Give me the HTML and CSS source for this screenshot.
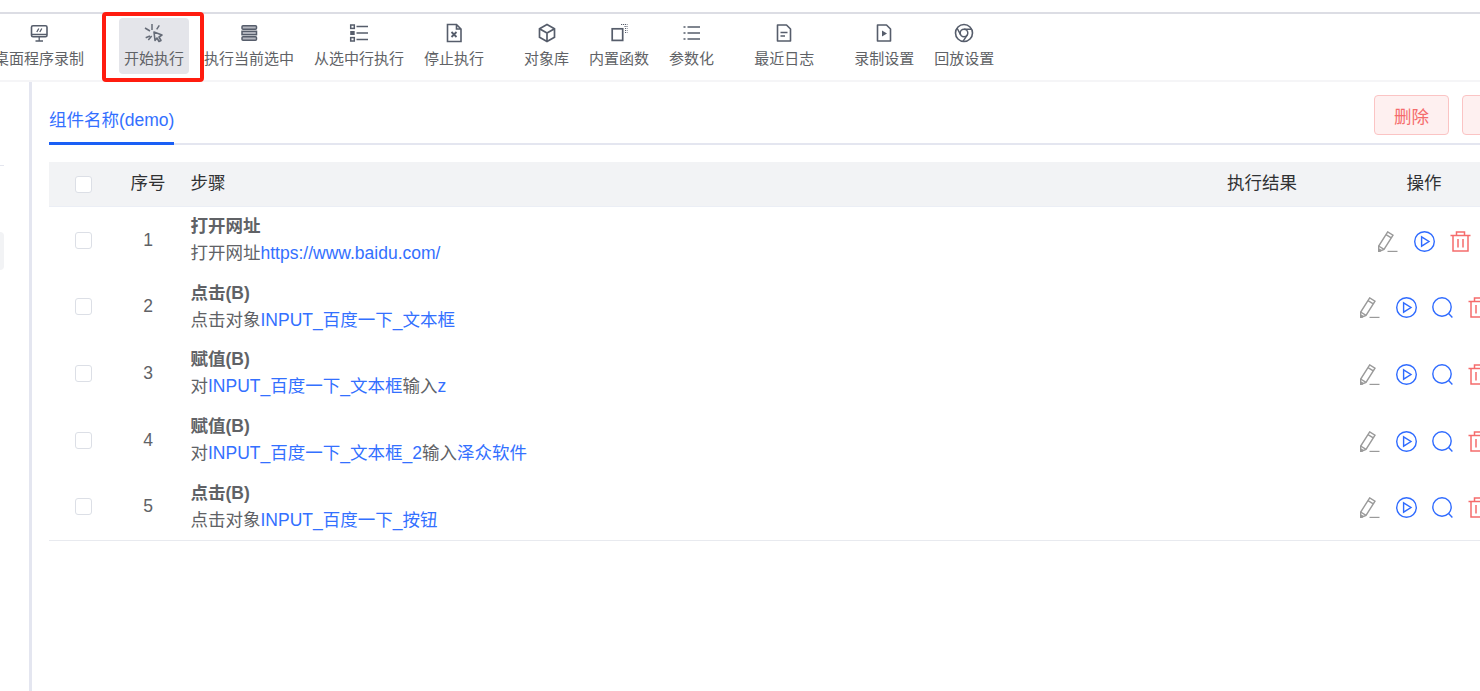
FILE: index.html
```html
<!DOCTYPE html>
<html lang="zh-CN">
<head>
<meta charset="utf-8">
<title>组件名称(demo)</title>
<link rel="stylesheet" href="styles.css">
</head>
<body>
<svg class="defs" width="0" height="0" aria-hidden="true">
  <defs>
    <g id="i-edit" fill="none" stroke="#9a9a9a" stroke-width="1.4">
      <path d="M0.7 20.6 V15 L9.700 0.900 L15 4.200 L6 18.400 Z"/>
      <path d="M0.700 15 L6 18.400 M8 3.600 L13.300 6.900"/>
      <path d="M0.900 18.500 L3 20" stroke-width="2.200"/>
      <path d="M9.500 20.500 H19.500"/>
    </g>
    <g id="i-play" fill="none" stroke="#2f6bff" stroke-width="1.4">
      <circle cx="10.500" cy="10.500" r="9.800"/>
      <path d="M7.600 5.800 L15 10.500 L7.600 15.200 Z"/>
    </g>
    <g id="i-search" fill="none" stroke="#2f6bff" stroke-width="1.4">
      <circle cx="10" cy="10" r="9.200"/>
      <path d="M16.600 16.600 L20.400 20.400"/>
    </g>
    <g id="i-trash" fill="none" stroke="#f56c6c" stroke-width="1.500">
      <path d="M0.500 4.500 H20.500 M6.500 4.500 V1 H14.500 V4.500"/>
      <path d="M3 4.500 V20 H18 V4.500"/>
      <path d="M8 8 V16.500 M13 8 V16.500"/>
    </g>
  </defs>
</svg>
<div class="topgap"></div>
<nav class="toolbar">
  <div class="tool first"><svg class="ticon" viewBox="0 0 20 20"><rect x="2.500" y="2.800" width="15.500" height="11" rx="1.500" fill="none" stroke="#565d6b" stroke-width="1.600"/><path d="M2.500 11.500H18" stroke="#565d6b" stroke-width="1.500"/><path d="M6.500 18H14M10.200 14V18M7.800 9L9.800 5.500M10.800 9L12.800 5.500" fill="none" stroke="#565d6b" stroke-width="1.300"/></svg><span>桌面程序录制</span></div>
  <div class="tool active"><svg class="ticon" viewBox="0 0 20 20"><path d="M8 1V7M15.300 2.300L12.700 6.300M1 5L6 8M1.700 14.700L6 13M4.300 17L7.700 13" fill="none" stroke="#666c78" stroke-width="1.500"/><path d="M10 9L18 12L15 14L17 17.500L15 18.500L13 15L11 17.500Z" fill="none" stroke="#666c78" stroke-width="1.600" stroke-linejoin="round"/></svg><span>开始执行</span></div>
  <div class="tool"><svg class="ticon" viewBox="0 0 20 20"><rect x="3" y="2.800" width="14.500" height="3.400" rx="1" fill="#b4b7bf" stroke="#565d6b" stroke-width="1.500"/><rect x="3" y="8.300" width="14.500" height="3.400" fill="#b4b7bf" stroke="#565d6b" stroke-width="1.500"/><rect x="3" y="13.800" width="14.500" height="3.400" rx="1" fill="#b4b7bf" stroke="#565d6b" stroke-width="1.500"/></svg><span>执行当前选中</span></div>
  <div class="tool"><svg class="ticon" viewBox="0 0 20 20"><path d="M7.500 3.500H19M7.500 10H19M7.500 16.500H19" stroke="#565d6b" stroke-width="1.600"/><rect x="1.700" y="2" width="3.600" height="3.400" fill="none" stroke="#565d6b" stroke-width="1.500"/><rect x="1.200" y="8" width="4.500" height="4" fill="#565d6b"/><rect x="1.700" y="14.600" width="3.600" height="3.400" fill="none" stroke="#565d6b" stroke-width="1.500"/></svg><span>从选中行执行</span></div>
  <div class="tool"><svg class="ticon" viewBox="0 0 20 20"><path d="M3.500 1.500H12.500L17 6V18.500H3.500Z M12.500 1.500V6H17" fill="none" stroke="#565d6b" stroke-width="1.600"/><path d="M7.500 9L12.500 14M12.500 9L7.500 14" stroke="#565d6b" stroke-width="1.800"/></svg><span>停止执行</span></div>
  <div class="tool gap"><svg class="ticon" viewBox="0 0 20 20"><path d="M10 1.500L17.500 5.700V14.300L10 18.500L2.500 14.300V5.700Z M2.500 5.700L10 10L17.500 5.700M10 10V18.500" fill="none" stroke="#565d6b" stroke-width="1.700"/></svg><span>对象库</span></div>
  <div class="tool"><svg class="ticon" viewBox="0 0 20 20"><rect x="3.200" y="5.800" width="10.500" height="11.600" fill="none" stroke="#565d6b" stroke-width="1.700"/><path d="M12 1.500H18.500M15.500 3.500H18.500M16 5.500H18.500M16 7.500H18.500M16 9.500H18.500" stroke="#565d6b" stroke-width="1.200" stroke-dasharray="1.200 0.800"/></svg><span>内置函数</span></div>
  <div class="tool"><svg class="ticon" viewBox="0 0 20 20"><path d="M5.500 4H18M5.500 10H18M5.500 16H18" stroke="#565d6b" stroke-width="1.600"/><path d="M1.500 4H3.500M1.500 10H3.500M1.500 16H3.500" stroke="#565d6b" stroke-width="1.600"/></svg><span>参数化</span></div>
  <div class="tool gap"><svg class="ticon" viewBox="0 0 20 20"><path d="M3.500 2H12.500L16.500 6V18H3.500Z" fill="none" stroke="#565d6b" stroke-width="1.600" stroke-linejoin="round"/><path d="M6.500 9.500H13.500M6.500 13H11" stroke="#565d6b" stroke-width="1.500"/></svg><span>最近日志</span></div>
  <div class="tool gap"><svg class="ticon" viewBox="0 0 20 20"><path d="M3.500 2H12.500L16.500 6V18H3.500Z" fill="none" stroke="#565d6b" stroke-width="1.600" stroke-linejoin="round"/><path d="M8 7.500L13 10.500L8 13.500Z" fill="#565d6b"/></svg><span>录制设置</span></div>
  <div class="tool"><svg class="ticon" viewBox="0 0 20 20"><circle cx="10" cy="10" r="8.500" fill="none" stroke="#565d6b" stroke-width="1.600"/><circle cx="10" cy="10" r="3.800" fill="none" stroke="#565d6b" stroke-width="1.500"/><path d="M10 6.200H18M6.700 11.900L3 5M13.300 11.900L9 18.400" fill="none" stroke="#565d6b" stroke-width="1.500"/></svg><span>回放设置</span></div>
</nav>
<div class="highlight"></div>
<div class="layout">
  <aside class="side">
    <div class="side-line"></div>
    <div class="side-item"></div>
  </aside>
  <main class="content">
    <div class="tabbar">
      <div class="tab">组件名称(demo)</div>
      <div class="actions">
        <button class="danger">删除</button>
        <button class="danger"></button>
      </div>
    </div>
    <div class="row head">
      <div class="c-check"><span class="box"></span></div>
      <div class="c-seq">序号</div>
      <div class="c-step">步骤</div>
      <div class="c-res">执行结果</div>
      <div class="c-act">操作</div>
    </div>
    <div class="row body">
      <div class="c-check"><span class="box"></span></div>
      <div class="c-seq num">1</div>
      <div class="c-step"><b>打开网址</b><p>打开网址<a>https://www.baidu.com/</a></p></div>
      <div class="c-res"></div>
      <div class="c-act">
        <svg class="a" viewBox="0 0 21 21"><use href="#i-edit"/></svg>
        <svg class="a" viewBox="0 0 21 21"><use href="#i-play"/></svg>
        <svg class="a" viewBox="0 0 21 21"><use href="#i-trash"/></svg>
      </div>
    </div>
    <div class="row body">
      <div class="c-check"><span class="box"></span></div>
      <div class="c-seq num">2</div>
      <div class="c-step"><b>点击(B)</b><p>点击对象<a>INPUT_百度一下_文本框</a></p></div>
      <div class="c-res"></div>
      <div class="c-act">
        <svg class="a" viewBox="0 0 21 21"><use href="#i-edit"/></svg>
        <svg class="a" viewBox="0 0 21 21"><use href="#i-play"/></svg>
        <svg class="a" viewBox="0 0 21 21"><use href="#i-search"/></svg>
        <svg class="a" viewBox="0 0 21 21"><use href="#i-trash"/></svg>
      </div>
    </div>
    <div class="row body">
      <div class="c-check"><span class="box"></span></div>
      <div class="c-seq num">3</div>
      <div class="c-step"><b>赋值(B)</b><p>对<a>INPUT_百度一下_文本框</a>输入<a>z</a></p></div>
      <div class="c-res"></div>
      <div class="c-act">
        <svg class="a" viewBox="0 0 21 21"><use href="#i-edit"/></svg>
        <svg class="a" viewBox="0 0 21 21"><use href="#i-play"/></svg>
        <svg class="a" viewBox="0 0 21 21"><use href="#i-search"/></svg>
        <svg class="a" viewBox="0 0 21 21"><use href="#i-trash"/></svg>
      </div>
    </div>
    <div class="row body">
      <div class="c-check"><span class="box"></span></div>
      <div class="c-seq num">4</div>
      <div class="c-step"><b>赋值(B)</b><p>对<a>INPUT_百度一下_文本框_2</a>输入<a>泽众软件</a></p></div>
      <div class="c-res"></div>
      <div class="c-act">
        <svg class="a" viewBox="0 0 21 21"><use href="#i-edit"/></svg>
        <svg class="a" viewBox="0 0 21 21"><use href="#i-play"/></svg>
        <svg class="a" viewBox="0 0 21 21"><use href="#i-search"/></svg>
        <svg class="a" viewBox="0 0 21 21"><use href="#i-trash"/></svg>
      </div>
    </div>
    <div class="row body last">
      <div class="c-check"><span class="box"></span></div>
      <div class="c-seq num">5</div>
      <div class="c-step"><b>点击(B)</b><p>点击对象<a>INPUT_百度一下_按钮</a></p></div>
      <div class="c-res"></div>
      <div class="c-act">
        <svg class="a" viewBox="0 0 21 21"><use href="#i-edit"/></svg>
        <svg class="a" viewBox="0 0 21 21"><use href="#i-play"/></svg>
        <svg class="a" viewBox="0 0 21 21"><use href="#i-search"/></svg>
        <svg class="a" viewBox="0 0 21 21"><use href="#i-trash"/></svg>
      </div>
    </div>
  </main>
</div>
</body>
</html>
```
FILE: styles.css
```css
* { box-sizing: border-box; }
html, body { margin: 0; padding: 0; height: 100%; overflow: hidden; background: #fff; }
body { font-family: "Liberation Sans", "Noto Sans CJK SC", sans-serif; color: #606266; width: 1480px; position: relative; }
.defs { position: absolute; }
.topgap { height: 12px; background: #fff; }
.toolbar {
  height: 70px;
  display: flex;
  align-items: flex-start;
  border-top: 2px solid #dcdde4;
  border-bottom: 2px solid #f5f5f7;
  padding-top: 4px;
  gap: 10px;
}
.tool {
  flex: none;
  height: 56px;
  padding: 5px 5px 0;
  border-radius: 4px;
  display: flex;
  flex-direction: column;
  align-items: center;
  font-size: 15px;
  line-height: 20px;
  color: #606266;
  white-space: nowrap;
}
.tool span { margin-top: 6px; }
.first { margin-left: -11px; }
.active { background: #e4e5ea; margin-left: 20px; }
.gap { margin-left: 20px; }
.ticon { width: 20px; height: 20px; display: block; }
.highlight {
  position: absolute;
  left: 102px;
  top: 12px;
  width: 102px;
  height: 70px;
  border: 4px solid #ff1c0f;
  border-radius: 4px;
}
.layout { display: flex; height: 609px; }
.side { width: 32px; flex: none; border-right: 3px solid #e4e6f0; padding-top: 83px; }
.side-line { width: 4px; height: 1px; background: #e4e6ef; }
.side-item { width: 4px; height: 38px; margin-top: 66px; background: #f2f3f5; border-radius: 0 5px 5px 0; }
.content { flex: none; width: 1505px; padding-left: 17px; }
.tabbar { height: 63px; border-bottom: 2px solid #e4e6f0; display: flex; justify-content: space-between; }
.tab { height: 63px; padding-top: 25px; line-height: 26px; font-size: 17.5px; color: #3370ff; border-bottom: 3px solid #1a5ff5; width: 125px; white-space: nowrap; }
.actions { display: flex; gap: 13px; padding-top: 13px; width: 163px; flex: none; }
.danger {
  flex: none;
  width: 75px;
  height: 40px;
  padding: 0;
  border: 1px solid #fbc4c4;
  background: #fef0f0;
  color: #f56c6c;
  border-radius: 4px;
  font: inherit;
  font-size: 17.5px;
}
.row { display: grid; grid-template-columns: 68px 62px 1023px 120px 204px; width: 1477px; align-items: center; }
.head { height: 45px; margin-top: 17px; padding-bottom: 3px; background: #f2f3f5; border-bottom: 1px solid #ebeef5; color: #303133; font-size: 17.5px; line-height: 26px; }
.head .c-check { margin-top: 3px; }
.body { height: 66.6px; font-size: 17.5px; }
.last { height: 67.6px; border-bottom: 1px solid #e8eaef; }
.c-check { padding-left: 1px; display: flex; justify-content: center; }
.box { display: block; width: 17px; height: 17px; border: 1px solid #dcdfe6; border-radius: 3px; background: #fff; }
.c-seq, .c-res { text-align: center; }
.c-step { padding-left: 11.5px; line-height: 26px; white-space: nowrap; }
.body .c-step { padding-bottom: 1px; }
.c-step b { display: block; font-weight: 700; }
.c-step p { margin: 1px 0 0; }
.c-step a { color: #3370ff; }
.c-act { display: flex; justify-content: center; align-items: center; gap: 15px; }
.body .c-act { padding-top: 2px; }
.a { width: 21px; height: 21px; display: block; flex: none; }
```
